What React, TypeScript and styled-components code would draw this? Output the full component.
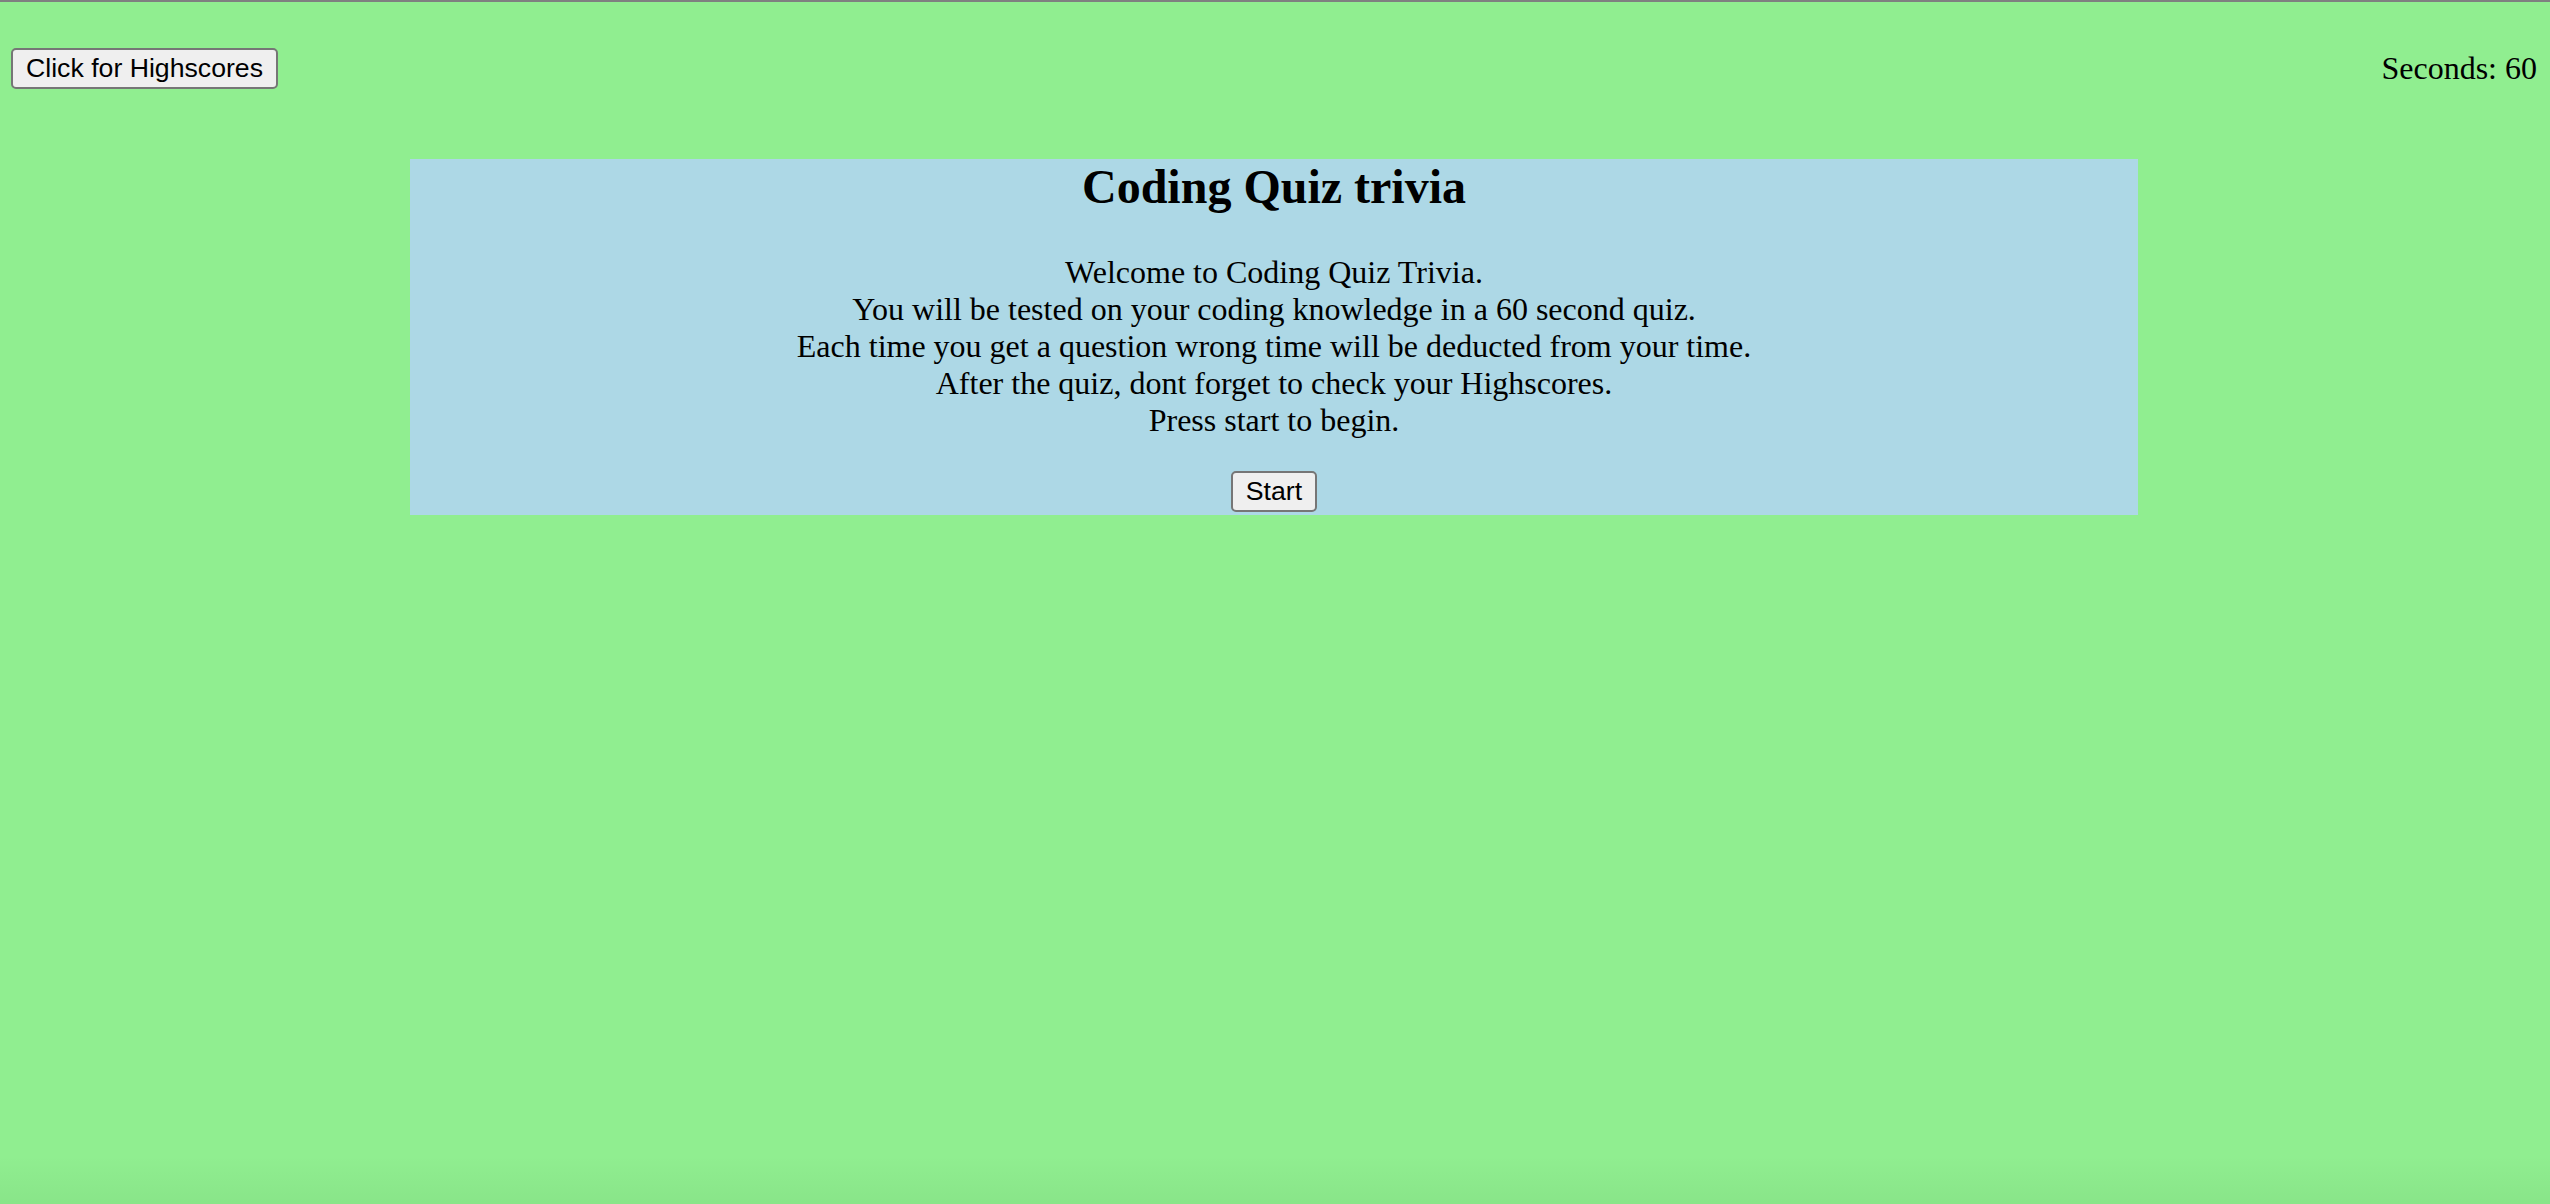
import React from "react";
import styled, { createGlobalStyle } from "styled-components";

const GlobalStyle = createGlobalStyle`
  html, body {
    margin: 0;
    padding: 0;
  }
  body {
    background: #90ee90;
    font-family: "Liberation Serif", "Times New Roman", serif;
    color: #000;
  }
  * {
    box-sizing: border-box;
  }
`;

const Page = styled.div`
  min-height: 100vh;
  border-top: 2px solid #7f8080;
  padding: 0 13px 0 11px;
  background: linear-gradient(
    to bottom,
    rgba(0, 0, 0, 0) calc(100% - 48px),
    rgba(0, 60, 0, 0.05) 100%
  );
`;

const Header = styled.header`
  display: flex;
  justify-content: space-between;
  align-items: center;
  padding-top: 46px;
`;

const Button = styled.button`
  display: block;
  font-family: "Liberation Sans", Arial, sans-serif;
  font-size: 26.67px;
  line-height: normal;
  color: #000;
  background: #efefef;
  border: 2px solid #767676;
  border-radius: 5px;
  padding: 3px 13px;
  margin: 0;
  cursor: pointer;
`;

const Timer = styled.div`
  font-size: 32px;
  line-height: normal;
`;

const Card = styled.section`
  width: 1728px;
  margin: 70px auto 0;
  background: #add8e6;
  text-align: center;
  display: flex;
  flex-direction: column;
  align-items: center;
  padding-bottom: 3px;
`;

const Title = styled.h2`
  margin: 0 0 39.84px;
  font-size: 48px;
  font-weight: bold;
  line-height: normal;
`;

const Intro = styled.p`
  margin: 0 0 32px;
  font-size: 32px;
  line-height: normal;
`;

const lines = [
  "Welcome to Coding Quiz Trivia.",
  "You will be tested on your coding knowledge in a 60 second quiz.",
  "Each time you get a question wrong time will be deducted from your time.",
  "After the quiz, dont forget to check your Highscores.",
  "Press start to begin.",
];

export default function App() {
  return (
    <>
      <GlobalStyle />
      <Page>
        <Header>
          <Button type="button">Click for Highscores</Button>
          <Timer>Seconds: 60</Timer>
        </Header>
        <Card>
          <Title>Coding Quiz trivia</Title>
          <Intro>
            {lines.map((l, i) => (
              <React.Fragment key={i}>
                {l}
                {i < lines.length - 1 && <br />}
              </React.Fragment>
            ))}
          </Intro>
          <Button type="button">Start</Button>
        </Card>
      </Page>
    </>
  );
}
